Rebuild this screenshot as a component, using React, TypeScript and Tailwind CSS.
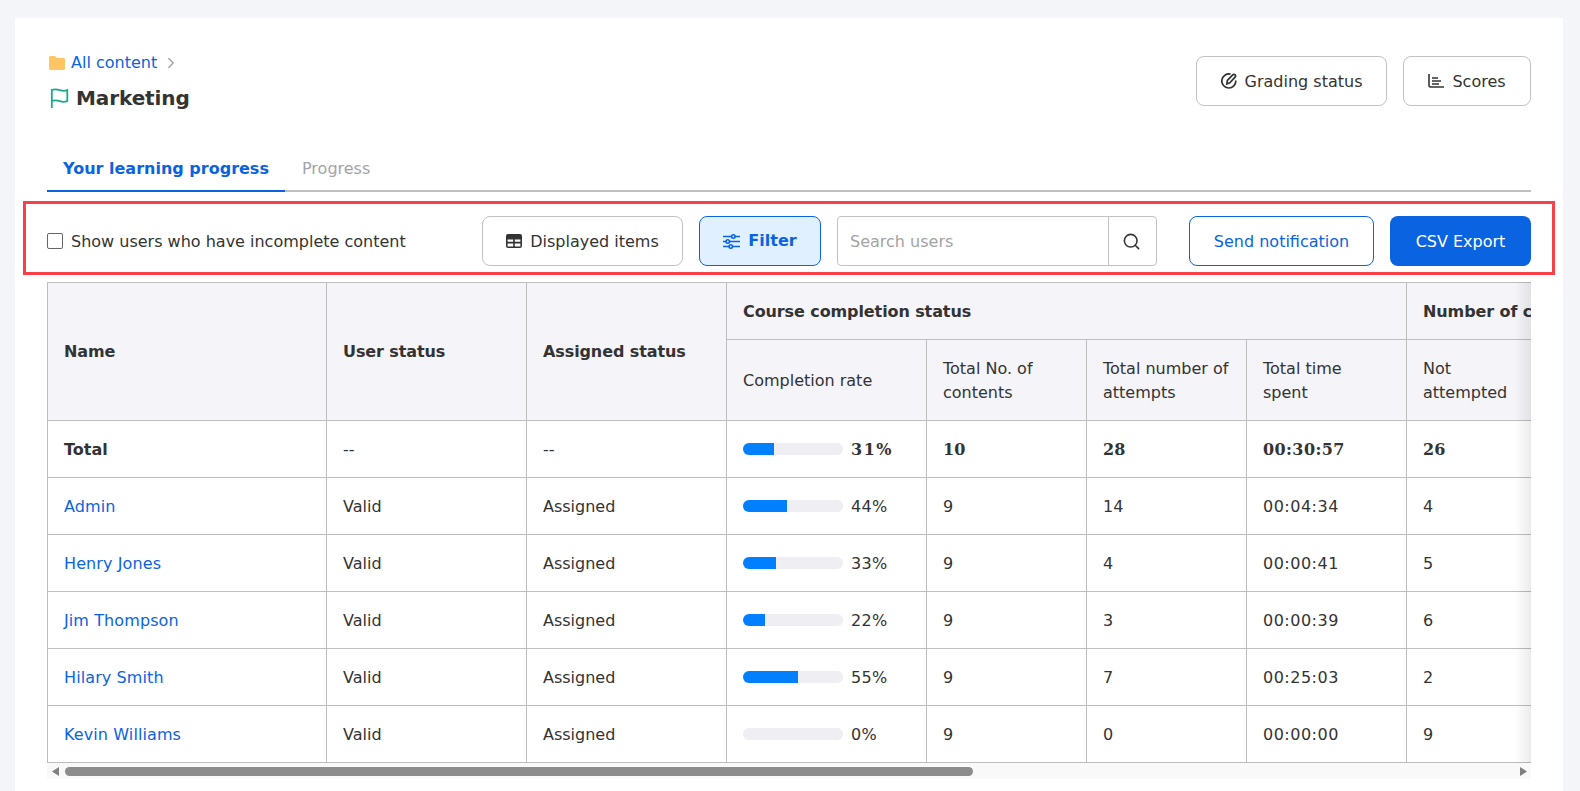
import { ChevronRight, Search } from 'lucide-react';

const rows = [
  { name: 'Admin', rate: 44, contents: 9, attempts: 14, time: '00:04:34', notAttempted: 4 },
  { name: 'Henry Jones', rate: 33, contents: 9, attempts: 4, time: '00:00:41', notAttempted: 5 },
  { name: 'Jim Thompson', rate: 22, contents: 9, attempts: 3, time: '00:00:39', notAttempted: 6 },
  { name: 'Hilary Smith', rate: 55, contents: 9, attempts: 7, time: '00:25:03', notAttempted: 2 },
  { name: 'Kevin Williams', rate: 0, contents: 9, attempts: 0, time: '00:00:00', notAttempted: 9 },
];

const cell = 'border border-[#bdbdbd] px-4 text-left align-middle';
const textCell = 'border border-[#bdbdbd] px-4 pt-[2px] text-left align-middle';
const head = 'border border-[#bdbdbd] px-4 text-left align-middle bg-[#f4f4f9] tracking-[-0.1px]';
const subHead = 'border border-[#bdbdbd] px-4 pt-[2px] text-left align-middle bg-[#f4f4f9] font-normal leading-6';

const ProgressBar = ({ rate }: { rate: number }) => (
  <div className="h-3 w-[100px] shrink-0 overflow-hidden rounded-md bg-[#eeeef3]">
    <div className="h-full bg-[#0080ff]" style={{ width: `${rate}%` }} />
  </div>
);

const App = () => {
  return (
    <div className="h-[791px] overflow-hidden bg-[#f4f5f9] pl-[15px] pr-[17px] pt-[18px] font-['DejaVu_Sans',sans-serif] text-[16px] text-[#333333]">
      <div className="h-[773px] bg-white px-8 pt-[38px]">
        {/* Title row */}
        <div className="flex items-start justify-between">
          <div>
            <div className="flex h-[14px] items-center text-[#0a63e0]">
              <svg width="16" height="14" viewBox="0 0 16 14" className="ml-[2px]">
                <path d="M0 1.500C0 .6.6 0 1.500 0h3.800c.5 0 .9.2 1.200.5L8 2h6.500c.9 0 1.500.6 1.500 1.500v9c0 .9-.6 1.500-1.500 1.500h-13C.6 14 0 13.400 0 12.500z" fill="#fdc663" />
              </svg>
              <span className="ml-[6px]">All content</span>
              <ChevronRight size={18} strokeWidth={1.6} className="ml-[5px] text-[#9c9ca6]" />
            </div>
            <div className="mt-[18px] flex items-center">
              <svg width="20" height="20" viewBox="0 0 20 20" fill="none" stroke="#1fa88c" strokeWidth="1.800" className="ml-[3px]">
                <path d="M1.800 20V1.800c3-.9 5.500-.6 8 .4s4.600 1.100 7.500 0v11c-2.900 1.100-5 1-7.500 0s-5-1.300-8-.4" />
              </svg>
              <span className="ml-[6px] text-[20px] font-bold leading-none tracking-[-0.1px]">Marketing</span>
            </div>
          </div>
          <div className="flex gap-4">
            <button className="flex h-[50px] w-[191px] items-center justify-center gap-2 rounded-lg border border-[#c2c2c2] bg-white pt-[2px]">
              <svg width="16" height="16" viewBox="0 0 16 16" fill="none" stroke="#333333" strokeWidth="1.700" className="-mt-[2px]">
                <path d="M9.500 1.200A7 7 0 1 0 14.800 7.500" />
                <path d="M5.800 11l.6-3.600 5.300-5.500c.7-.7 1.800-.7 2.400 0s.6 1.700 0 2.300L8.800 9.800z" />
              </svg>
              Grading status
            </button>
            <button className="flex h-[50px] w-[128px] items-center justify-center gap-2 rounded-lg border border-[#c2c2c2] bg-white pt-[2px]">
              <svg width="16" height="14" viewBox="0 0 16 14" fill="none" stroke="#333333" strokeWidth="1.600" className="-mt-[2px]">
                <path d="M1 0v11.500c0 1 .5 1.500 1.500 1.500H16" />
                <path d="M4 4h6M4 7h9M4 10h7" />
              </svg>
              Scores
            </button>
          </div>
        </div>

        {/* Tabs */}
        <div className="mt-[38px] flex h-[46px] border-b-2 border-[#bfbfbf]">
          <div className="-mb-[2px] flex w-[238px] items-center justify-center border-b-[2px] border-[#0a63e0] pt-[2px] font-bold text-[#0a63e0]">
            Your learning progress
          </div>
          <div className="ml-[17px] flex items-center pt-[2px] text-[#a3a3ab]">Progress</div>
        </div>

        {/* Toolbar */}
        <div className="-mx-[24px] mt-[9px] flex h-[74px] items-start border-[3px] border-[#f84048] px-[21px] pt-[12px]">
          <label className="flex h-[50px] items-center">
            <span className="h-4 w-4 rounded-[2px] border border-[#666666] bg-white" />
            <span className="ml-2 pt-[2px]">Show users who have incomplete content</span>
          </label>
          <button className="ml-auto flex h-[50px] w-[201px] items-center justify-center gap-2 rounded-lg border border-[#c2c2c2] bg-white pt-[2px]">
            <svg width="16" height="14" viewBox="0 0 16 14" className="-mt-[2px]">
              <path d="M2 0h12a2 2 0 0 1 2 2v10a2 2 0 0 1-2 2H2a2 2 0 0 1-2-2V2a2 2 0 0 1 2-2zm-.4 5.400v2.400h5.600V5.400zm7.200 0v2.400h5.600V5.400zM1.600 9.400v3h5.600v-3zm7.200 0v3h5.600v-3z" fill="#333333" fillRule="evenodd" />
            </svg>
            Displayed items
          </button>
          <button className="ml-4 flex h-[50px] w-[122px] items-center justify-center gap-2 rounded-lg border border-[#0a63e0] bg-[#e1f0ff] font-bold text-[#0a63e0]">
            <svg width="17" height="15" viewBox="0 0 17 15" fill="none" stroke="#0a63e0" strokeWidth="1.600">
              <path d="M0 2.500h8.500M12 2.500h5M0 7.500h3M6.500 7.500h10.500M0 12.500h6M9.500 12.500h7.500" />
              <circle cx="10.300" cy="2.500" r="1.700" />
              <circle cx="4.800" cy="7.500" r="1.700" />
              <circle cx="7.800" cy="12.500" r="1.700" />
            </svg>
            Filter
          </button>
          <div className="ml-4 flex h-[50px] w-[320px] rounded-[4px] border border-[#c2c2c2] bg-white">
            <div className="flex flex-1 items-center px-3 pt-[2px] text-[#a3a3a3]">Search users</div>
            <div className="flex w-[48px] items-center justify-center border-l border-[#c2c2c2]">
              <Search size={19} strokeWidth={2} className="-ml-[2px] text-[#333333]" />
            </div>
          </div>
          <button className="ml-8 h-[50px] w-[185px] rounded-lg border border-[#0a63e0] bg-white pt-[2px] text-[#0a63e0]">
            Send notification
          </button>
          <button className="ml-4 h-[50px] w-[141px] rounded-lg bg-[#0a63e0] pt-[2px] text-white">CSV Export</button>
        </div>

        {/* Table */}
        <div className="relative mt-[7px] overflow-hidden">
          <table className="w-[1600px] table-fixed border-collapse">
            <colgroup>
              <col className="w-[279px]" />
              <col className="w-[200px]" />
              <col className="w-[200px]" />
              <col className="w-[200px]" />
              <col className="w-[160px]" />
              <col className="w-[160px]" />
              <col className="w-[160px]" />
              <col className="w-[241px]" />
            </colgroup>
            <thead>
              <tr className="h-[57px]">
                <th rowSpan={2} className={head}>Name</th>
                <th rowSpan={2} className={head}>User status</th>
                <th rowSpan={2} className={head}>Assigned status</th>
                <th colSpan={4} className={`${head} pt-[2px]`}>Course completion status</th>
                <th className={`${head} whitespace-nowrap pt-[2px]`}>Number of contents</th>
              </tr>
              <tr className="h-[81px]">
                <th className={subHead}>Completion rate</th>
                <th className={subHead}>Total No. of contents</th>
                <th className={subHead}>Total number of attempts</th>
                <th className={subHead}>Total time spent</th>
                <th className={subHead}>Not<br />attempted</th>
              </tr>
            </thead>
            <tbody>
              <tr className="h-[57px] font-bold">
                <td className={textCell}>Total</td>
                <td className={`${textCell} font-normal`}>--</td>
                <td className={`${textCell} font-normal`}>--</td>
                <td className={cell}>
                  <div className="flex items-center gap-2">
                    <ProgressBar rate={31} />
                    <span className="pt-[2px] font-['DejaVu_Serif',serif] tracking-[1.500px]">31%</span>
                  </div>
                </td>
                <td className={`${textCell} font-['DejaVu_Serif',serif]`}>10</td>
                <td className={`${textCell} font-['DejaVu_Serif',serif]`}>28</td>
                <td className={`${textCell} font-['DejaVu_Serif',serif] tracking-[0.4px]`}>00:30:57</td>
                <td className={`${textCell} font-['DejaVu_Serif',serif]`}>26</td>
              </tr>
              {rows.map((row) => (
                <tr key={row.name} className="h-[57px]">
                  <td className={`${textCell} tracking-[0.1px] text-[#0a63e0]`}>{row.name}</td>
                  <td className={textCell}>Valid</td>
                  <td className={textCell}>Assigned</td>
                  <td className={cell}>
                    <div className="flex items-center gap-2">
                      <ProgressBar rate={row.rate} />
                      <span className="pt-[2px] tracking-[0.3px]">{row.rate}%</span>
                    </div>
                  </td>
                  <td className={textCell}>{row.contents}</td>
                  <td className={textCell}>{row.attempts}</td>
                  <td className={`${textCell} tracking-[0.5px]`}>{row.time}</td>
                  <td className={textCell}>{row.notAttempted}</td>
                </tr>
              ))}
            </tbody>
          </table>
          {/* Scroll shadow */}
          <div className="absolute bottom-0 right-0 top-0 w-4 bg-gradient-to-r from-transparent to-[#00000014]" />
        </div>

        {/* Scrollbar */}
        <div className="flex h-[16px] items-center bg-[#f9f9f9] pl-[5px] pr-[4px]">
          <svg width="7" height="9" viewBox="0 0 7 9"><path d="M7 0v9L0 4.500z" fill="#808080" /></svg>
          <div className="ml-[6px] h-[9px] w-[908px] rounded-full bg-[#8c8c8c]" />
          <svg width="7" height="9" viewBox="0 0 7 9" className="ml-auto"><path d="M0 0v9l7-4.500z" fill="#808080" /></svg>
        </div>
      </div>
    </div>
  );
};

export default App;
